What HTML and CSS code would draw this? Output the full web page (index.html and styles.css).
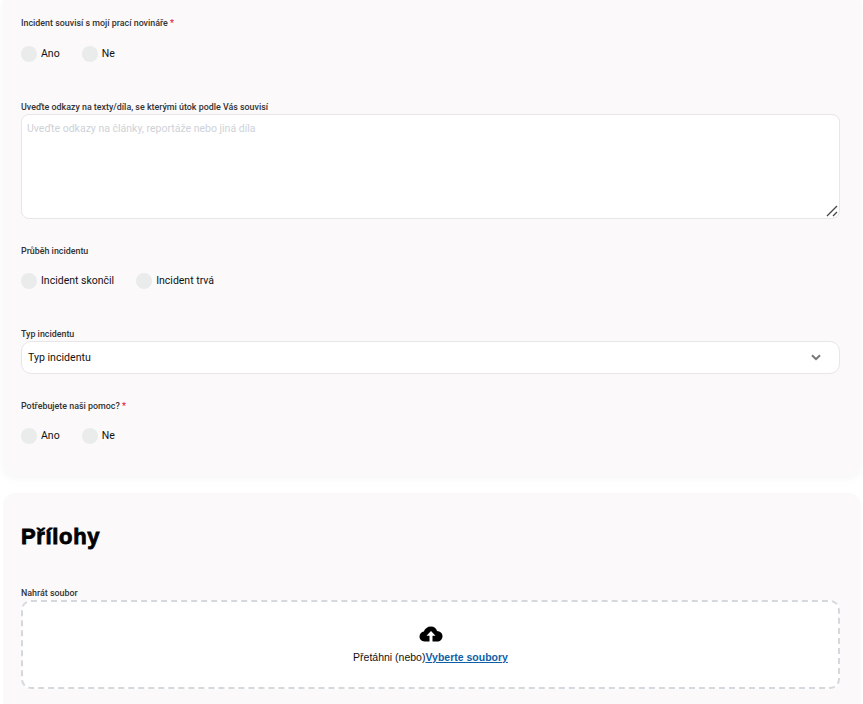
FILE: index.html
```html
<!DOCTYPE html>
<html lang="cs">
<head>
<meta charset="utf-8">
<title>Incident</title>
<link rel="stylesheet" href="styles.css">
</head>
<body>
<main class="page">
  <section class="card card-top">
    <div class="field field-radio first">
      <div class="label">Incident souvisí s mojí prací novináře <span class="req">*</span></div>
      <div class="radios">
        <label class="radio"><span class="dot"></span>Ano</label>
        <label class="radio"><span class="dot"></span>Ne</label>
      </div>
    </div>
    <div class="field field-area">
      <div class="label">Uveďte odkazy na texty/díla, se kterými útok podle Vás souvisí</div>
      <div class="area">
        <span class="placeholder">Uveďte odkazy na články, reportáže nebo jiná díla</span>
        <svg class="grip" width="12" height="12" viewBox="0 0 12 12"><path d="M1 11 11 1M7 11l4-4" stroke="#444" stroke-width="1.3" fill="none"/></svg>
      </div>
    </div>
    <div class="field field-radio second">
      <div class="label">Průběh incidentu</div>
      <div class="radios">
        <label class="radio"><span class="dot"></span>Incident skončil</label>
        <label class="radio"><span class="dot"></span>Incident trvá</label>
      </div>
    </div>
    <div class="field field-select">
      <div class="label">Typ incidentu</div>
      <div class="select">
        <span>Typ incidentu</span>
        <svg width="10" height="7" viewBox="0 0 10 7"><path d="M1 1.2 5 5.2 9 1.2" stroke="#777" stroke-width="2" fill="none"/></svg>
      </div>
    </div>
    <div class="field field-radio third">
      <div class="label">Potřebujete naši pomoc? <span class="req">*</span></div>
      <div class="radios">
        <label class="radio"><span class="dot"></span>Ano</label>
        <label class="radio"><span class="dot"></span>Ne</label>
      </div>
    </div>
  </section>
  <section class="card card-bottom">
    <h2 class="title">Přílohy</h2>
    <div class="label">Nahrát soubor</div>
    <div class="drop">
      <svg class="cloud" width="24" height="16" viewBox="0 0 24 16"><path fill-rule="evenodd" d="M12 .5c3 0 5.400 1.900 6.100 4.600C21 5.400 23.500 7.300 23.500 10.200c0 3-2.400 5.300-5.300 5.300H5.500C2.500 15.500.5 13.300.5 10.600c0-2.600 1.900-4.600 4.300-5C5.800 2.500 8.600.5 12 .5ZM12 5 7.500 9.800h3V15.500h3V9.800h3Z"/></svg>
      <p class="drop-text">Přetáhni (nebo)<a class="link" href="#">Vyberte soubory</a></p>
    </div>
  </section>
</main>
</body>
</html>
```
FILE: styles.css
```css
* { box-sizing: border-box; }
html, body { margin: 0; padding: 0; }
body {
  height: 704px;
  overflow: hidden;
  background: #fff;
  font-family: Roboto, "Liberation Sans", sans-serif;
  color: #111;
}
.page { display: flex; flex-direction: column; gap: 17px; padding: 0 2px 0 3px; }
.card { background: #fbf9fa; padding: 0 21px 0 18px; }
.card-top { height: 476px; border-radius: 0 0 12px 12px; box-shadow: 0 2px 6px rgba(240,238,240,.5); }
.card-bottom { border-radius: 12px 12px 0 0; height: 211px; }
.label { font-size: 8.9px; line-height: 12px; font-weight: 500; color: #333; }
.req { color: #e0123c; }
.field { display: flex; flex-direction: column; }
.first { padding-top: 17px; }
.field-area { margin-top: 39px; gap: 1px; }
.second { margin-top: 26px; }
.field-select { margin-top: 39px; gap: 1px; }
.third { margin-top: 26px; }
.radios { display: flex; gap: 22px; margin-top: 16px; }
.first .radios { margin-top: 17px; }
.radio { display: flex; align-items: center; gap: 4px; font-size: 10.5px; line-height: 16px; color: #111; }
.dot { width: 16px; height: 16px; border-radius: 50%; background: #eaebeb; }
.area {
  position: relative;
  height: 105px;
  padding: 7px 5px;
  background: #fff;
  border: 1px solid #e7e6e8;
  border-radius: 8px;
  font-size: 10.5px;
  line-height: 14px;
}
.placeholder { color: #ced2d8; }
.grip { position: absolute; right: 1px; bottom: 1px; }
.select {
  display: flex;
  align-items: center;
  justify-content: space-between;
  height: 33px;
  padding: 0 18px 0 6px;
  background: #fff;
  border: 1px solid #e7e6e8;
  border-radius: 10px;
  font-size: 10.6px;
}
.title {
  margin: 0 0 36px;
  padding-top: 30px;
  font-family: "Liberation Sans", Arial, sans-serif;
  font-size: 22px;
  line-height: 28px;
  font-weight: 700;
  color: #000;
  -webkit-text-stroke: .8px #000;
  letter-spacing: .65px;
}
.drop {
  display: flex;
  flex-direction: column;
  align-items: center;
  height: 89px;
  margin-top: 1px;
  padding-top: 24px;
  background: #fff;
  border: 2px dashed #d5d8dd;
  border-radius: 10px;
}
.cloud { display: block; }
.drop-text {
  margin: 8px 0 0;
  font-family: "Liberation Sans", Arial, sans-serif;
  font-size: 10.5px;
  line-height: 14px;
  color: #111;
}
.link { color: #0f5fa8; font-weight: 700; text-decoration: underline; }
```
